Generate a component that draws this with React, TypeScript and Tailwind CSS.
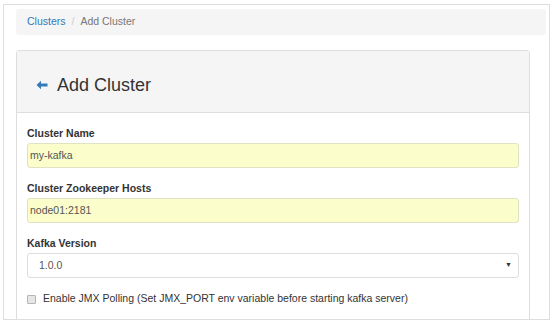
import React from "react";

const font = { fontFamily: '"Liberation Sans", Arial, sans-serif' };

function Field({ label, value }: { label: string; value: string }) {
  return (
    <div className="mb-[12px]">
      <div className="text-[10.5px] font-bold leading-[16px] mb-[2px] text-[#333]">{label}</div>
      <div className="h-[25px] w-full border border-[#e0e2c4] rounded-[3px] bg-[#fbfdca] flex items-center pl-[2px] text-[10.5px] text-[#555]">
        {value}
      </div>
    </div>
  );
}

export default function App() {
  return (
    <div className="bg-white w-[554px] h-[323px] pt-[4px] pl-[3px]" style={font}>
      <div className="w-[547px] h-[316px] border border-[#dedede] overflow-hidden pl-[12px] pt-[4px]">
        {/* breadcrumb */}
        <div className="w-[530px] h-[26px] bg-[#f5f5f5] rounded-[3px] flex items-center px-[11px] text-[10.5px]">
          <span className="text-[#337ab7]">Clusters</span>
          <span className="text-[#ccc] px-[6px]">/</span>
          <span className="text-[#777]">Add Cluster</span>
        </div>

        {/* panel */}
        <div className="mt-[15px] w-[514px] h-[300px] border border-[#ddd] rounded-t-[3px]">
          <div className="h-[62px] bg-[#f5f5f5] border-b border-[#ddd] flex items-center pl-[19px] pt-[7px]">
            <svg width="12" height="10" viewBox="0 0 12 10" className="mr-[9px]">
              <path d="M0.5 5 L5 0.8 L5 3.6 L11.5 3.6 L11.5 6.4 L5 6.4 L5 9.2 Z" fill="#337ab7" />
            </svg>
            <span className="text-[18px] text-[#333] leading-none">Add Cluster</span>
          </div>

          <div className="px-[10px] pt-[12px]">
            <Field label="Cluster Name" value="my-kafka" />
            <Field label="Cluster Zookeeper Hosts" value="node01:2181" />

            <div>
              <div className="text-[10.5px] font-bold leading-[16px] mb-[2px] text-[#333]">Kafka Version</div>
              <div className="h-[25px] w-full border border-[#ddd] rounded-[3px] bg-white flex items-center justify-between pl-[11px] pr-[6px] text-[10.5px] text-[#555]">
                <span>1.0.0</span>
                <span className="text-[7px] text-[#333]">▼</span>
              </div>
            </div>

            <div className="mt-[13px] h-[16px] flex items-center text-[10.5px] text-[#333]">
              <span className="w-[9px] h-[9px] border border-[#b5b5b5] bg-[#e6e6e6] rounded-[1px] mr-[7px]" />
              <span>Enable JMX Polling (Set JMX_PORT env variable before starting kafka server)</span>
            </div>
          </div>
        </div>
      </div>
    </div>
  );
}
